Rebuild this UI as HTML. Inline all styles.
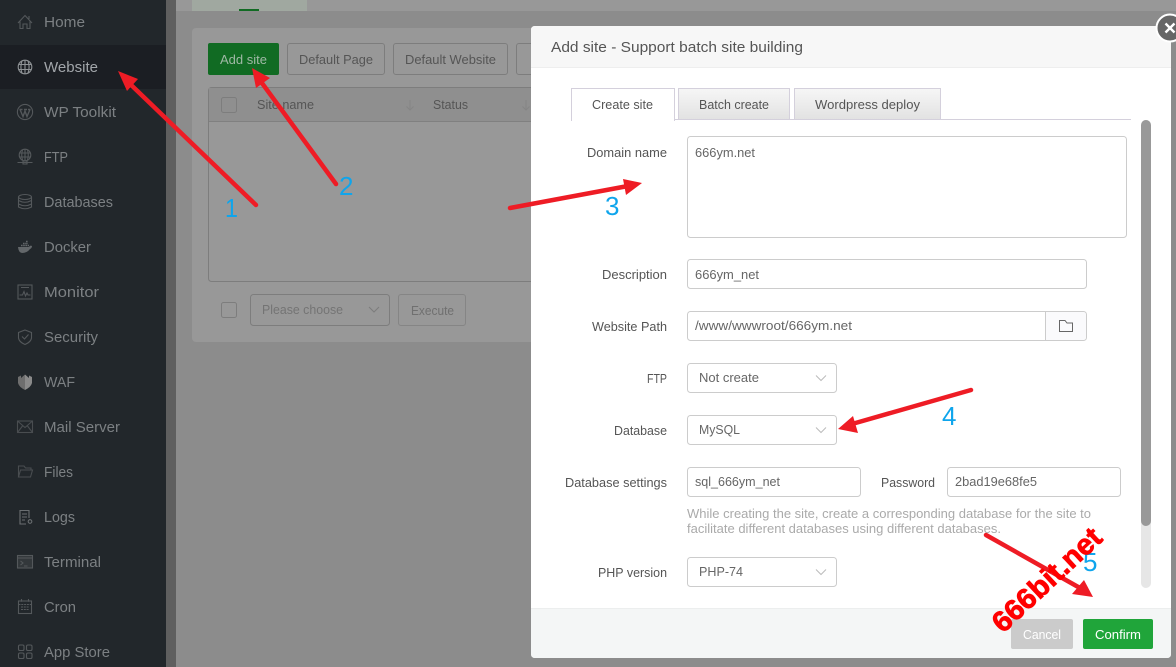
<!DOCTYPE html>
<html lang="en"><head><meta charset="utf-8"><title>Add site</title>
<style>
html,body{margin:0;padding:0;width:1176px;height:667px;overflow:hidden;background:#8c8c8c}
svg{display:block}
text{font-family:"Liberation Sans",sans-serif;font-size:13px;fill:#555}
.nav text{font-size:14.5px;fill:#7c8083}
.ic{fill:none;stroke:#54585b;stroke-width:1.1}
.bg text{fill:#555}
.lab text{fill:#555;text-anchor:end;font-size:13px}
.val text{fill:#666;font-size:13px}
.box{fill:#fff;stroke:#ccc;stroke-width:1}
.chev{fill:none;stroke:#bbb;stroke-width:1}
.ar{stroke:#ee1c25;stroke-width:4.5;stroke-linecap:round;fill:none}
.hd{fill:#ee1c25}
.num text{fill:#0fa5ec;font-size:26px}
</style></head>
<body>
<svg width="1176" height="667" viewBox="0 0 1176 667" xmlns="http://www.w3.org/2000/svg">
<rect width="1176" height="667" fill="#8c8c8c"/>
<rect x="176" y="0" width="1000" height="11" fill="#989898"/>
<rect x="192" y="0" width="115" height="11" fill="#a0a8a0"/>
<rect x="239" y="9" width="20" height="2" fill="#116b23"/>
<rect x="166" y="0" width="10" height="667" fill="#5f5f5f"/>

<!-- sidebar -->
<rect width="166" height="667" fill="#22272b"/>
<rect y="45" width="166" height="44" fill="#1b1e23"/>
<g class="nav">
<text x="44" y="27" textLength="41" lengthAdjust="spacingAndGlyphs">Home</text>
<text x="44" y="72" textLength="54" lengthAdjust="spacingAndGlyphs" style="fill:#a2a6aa">Website</text>
<text x="44" y="117" textLength="72" lengthAdjust="spacingAndGlyphs">WP Toolkit</text>
<text x="44" y="162" textLength="24" lengthAdjust="spacingAndGlyphs">FTP</text>
<text x="44" y="207" textLength="69" lengthAdjust="spacingAndGlyphs">Databases</text>
<text x="44" y="252" textLength="47" lengthAdjust="spacingAndGlyphs">Docker</text>
<text x="44" y="297" textLength="55" lengthAdjust="spacingAndGlyphs">Monitor</text>
<text x="44" y="342" textLength="54" lengthAdjust="spacingAndGlyphs">Security</text>
<text x="44" y="387" textLength="31" lengthAdjust="spacingAndGlyphs">WAF</text>
<text x="44" y="432" textLength="76" lengthAdjust="spacingAndGlyphs">Mail Server</text>
<text x="44" y="477" textLength="29" lengthAdjust="spacingAndGlyphs">Files</text>
<text x="44" y="522" textLength="31" lengthAdjust="spacingAndGlyphs">Logs</text>
<text x="44" y="567" textLength="57" lengthAdjust="spacingAndGlyphs">Terminal</text>
<text x="44" y="612" textLength="32" lengthAdjust="spacingAndGlyphs">Cron</text>
<text x="44" y="657" textLength="66" lengthAdjust="spacingAndGlyphs">App Store</text>
</g>
<g class="ic">
<path d="M18 23 L25 15.500 L32 23 M20 21.500 V28.500 H23 V24 H27 V28.500 H30 V21.500 M29 19 V16"/>
<g stroke="#8f9396"><circle cx="25" cy="67" r="6.800"/><path d="M18.500 64.500 H31.500 M18.500 69.500 H31.500 M25 60 V74 M22 60.800 Q19.800 67 22 73.200 M28 60.800 Q30.200 67 28 73.200"/></g>
<circle cx="25" cy="112" r="7.600"/><path d="M20 109.500 L23 116.500 L25 111 L27 116.500 L30 109.500 M19.500 109.500 H22.500 M24 109.500 H27 M28 109.500 H30.500" stroke-width="1.400"/>
<circle cx="25" cy="155" r="5.800"/><path d="M19.500 153 H30.500 M19.500 157 H30.500 M25 149 V161 M22.500 150 Q21 155 22.500 160 M27.500 150 Q29 155 27.500 160 M17.500 162.500 H32.500 M23 161 H27 V164 H23Z"/>
<ellipse cx="25" cy="197" rx="6.500" ry="2.500"/><path d="M18.500 197 V207 Q25 210.500 31.500 207 V197 M18.500 200.500 Q25 204 31.500 200.500 M18.500 204 Q25 207.500 31.500 204"/>
<path d="M18 247 H29 Q30 245 32 246 Q32 248 30 249 Q27 253 22 253 Q18.500 252.500 18 247Z" fill="#63676a" stroke="none"/><path d="M21 245.500 h8 M23 243.500 h5 M26 241.500 h2" stroke="#63676a" stroke-width="1.600" stroke-dasharray="1.600 .6"/>
<rect x="18" y="285" width="14" height="14"/><path d="M19.500 295 L22.500 295 L24 291.500 L25.500 296 L27 293 L28 295 H30.500 M21 287.500 H29"/>
<path d="M25 330 L31.500 332.500 V338 Q31 342 25 344.500 Q19 342 18.500 338 V332.500Z M22 336.500 L24.500 339 L28.500 334.500"/>
<path d="M18 377 L21 375.500 V378 L25 374.500 V390 Q19 387 18 383Z" fill="#6e6e6e" stroke="none"/>
<path d="M25 374.500 L29 378 V375.500 L32 377 V383 Q31 387 25 390Z" fill="#8a8a8a" stroke="none"/>
<rect x="17.500" y="421" width="15" height="11.500" stroke="#494d50"/><path d="M17.500 421 L25 427.500 L32.500 421 M17.500 432.500 L22.500 426 M32.500 432.500 L27.500 426" stroke="#494d50"/>
<path d="M18.500 477 V466 H24 L25.500 468 H31 V470 M18.500 477 L20.500 470 H32.500 L30.500 477Z" stroke="#494d50"/>
<path d="M29 518 V510.500 H20 V524 H26 M22 514 H27 M22 517 H27 M22 520 H25" stroke="#6a6e71"/><circle cx="30" cy="521.500" r="1.800" stroke="#6a6e71"/>
<rect x="17.500" y="555.500" width="15" height="12.500" fill="#33383b"/><path d="M17.500 558 H32.500 M20.500 561 L23 563 L20.500 565 M24 566 H27.500"/>
<rect x="18.500" y="601" width="13" height="12.500"/><path d="M18.500 604.500 H31.500 M21.500 599 V602 M28.500 599 V602 M21 607 H29 M21 609.500 H29" stroke-dasharray="2 .8"/>
<rect x="18.500" y="645" width="5.500" height="5.500" rx="1.400"/><rect x="26.500" y="645" width="5.500" height="5.500" rx="1.400"/><rect x="18.500" y="653" width="5.500" height="5.500" rx="1.400"/><rect x="26.500" y="653" width="5.500" height="5.500" rx="1.400"/>
</g>

<!-- website page, dimmed -->
<rect x="192" y="28" width="360" height="314" rx="4" fill="#989898"/>
<rect x="208" y="43" width="71" height="32" rx="2" fill="#116b23"/>
<text x="220" y="64" textLength="47" lengthAdjust="spacingAndGlyphs" style="fill:#9fb8a5">Add site</text>
<g fill="none" stroke="#7d7d7d">
<rect x="287.500" y="43.500" width="97" height="31" rx="2.500"/>
<rect x="393.500" y="43.500" width="114" height="31" rx="2.500"/>
<rect x="516.500" y="43.500" width="30" height="31" rx="2.500"/>
<rect x="208.500" y="87.500" width="340" height="194" rx="3"/>
</g>
<rect x="209" y="88" width="340" height="33" fill="#8f8f8f"/>
<path d="M209 121.500 H540" stroke="#808080"/>
<g class="bg">
<text x="299" y="64" textLength="74" lengthAdjust="spacingAndGlyphs">Default Page</text>
<text x="405" y="64" textLength="91" lengthAdjust="spacingAndGlyphs">Default Website</text>
<text x="257" y="109" textLength="57" lengthAdjust="spacingAndGlyphs">Site name</text>
<text x="433" y="109" textLength="35" lengthAdjust="spacingAndGlyphs">Status</text>
</g>
<path d="M410 100 V110 M406.500 106.500 L410 110 L413.500 106.500 M526 100 V110 M522.500 106.500 L526 110 L529.500 106.500" stroke="#858585" fill="none"/>
<g fill="none" stroke="#7d7d7d">
<rect x="221.500" y="97.500" width="15" height="15" rx="2"/>
<rect x="221.500" y="302.500" width="15" height="15" rx="2"/>
<rect x="250.500" y="294.500" width="139" height="31" rx="3"/>
<rect x="398.500" y="294.500" width="67" height="31" rx="2.500" stroke="#858585"/>
<path d="M369 307 L374 312 L379 307"/>
</g>
<text x="262" y="314" textLength="81" lengthAdjust="spacingAndGlyphs" style="fill:#747474">Please choose</text>
<text x="411" y="315" textLength="43" lengthAdjust="spacingAndGlyphs" style="fill:#707070">Execute</text>

<!-- modal -->
<rect x="531" y="26" width="640" height="632" rx="4" fill="#fff"/>
<path d="M531 67 V30 Q531 26 535 26 H1167 Q1171 26 1171 30 V67Z" fill="#f7f7f7"/>
<path d="M531 67.500 H1171" stroke="#eee"/>
<text x="551" y="52" textLength="252" lengthAdjust="spacingAndGlyphs" style="font-size:15px;fill:#555">Add site - Support batch site building</text>
<circle cx="1170" cy="28" r="13.500" fill="#666" stroke="#fff" stroke-width="2"/>
<path d="M1165.500 23.500 L1174.500 32.500 M1174.500 23.500 L1165.500 32.500" stroke="#fff" stroke-width="2.400"/>

<!-- tabs -->
<defs><linearGradient id="t" x1="0" y1="0" x2="0" y2="1"><stop offset="0" stop-color="#f6f6f6"/><stop offset="1" stop-color="#e2e2e2"/></linearGradient></defs>
<path d="M571 119.500 H1131" stroke="#d4d0dc"/>
<rect x="571.500" y="88.500" width="103" height="32" fill="#fff" stroke="#d4d0dc"/>
<rect x="572" y="119" width="102" height="3" fill="#fff"/>
<rect x="678.500" y="88.500" width="111" height="31" fill="url(#t)" stroke="#d4d0dc"/>
<rect x="794.500" y="88.500" width="146" height="31" fill="url(#t)" stroke="#d4d0dc"/>
<text x="592" y="109" textLength="61" lengthAdjust="spacingAndGlyphs">Create site</text>
<text x="699" y="109" textLength="70" lengthAdjust="spacingAndGlyphs">Batch create</text>
<text x="815" y="109" textLength="105" lengthAdjust="spacingAndGlyphs">Wordpress deploy</text>

<!-- scrollbar -->
<rect x="1141" y="120" width="10" height="468" rx="5" fill="#e6e6e6"/>
<rect x="1141" y="120" width="10" height="406" rx="5" fill="#999"/>

<!-- form -->
<g class="lab">
<text x="667" y="157" textLength="80" lengthAdjust="spacingAndGlyphs">Domain name</text>
<text x="667" y="279" textLength="65" lengthAdjust="spacingAndGlyphs">Description</text>
<text x="667" y="331" textLength="75" lengthAdjust="spacingAndGlyphs">Website Path</text>
<text x="667" y="383" textLength="20" lengthAdjust="spacingAndGlyphs">FTP</text>
<text x="667" y="435" textLength="53" lengthAdjust="spacingAndGlyphs">Database</text>
<text x="667" y="487" textLength="102" lengthAdjust="spacingAndGlyphs">Database settings</text>
<text x="935" y="487" textLength="54" lengthAdjust="spacingAndGlyphs">Password</text>
<text x="667" y="577" textLength="69" lengthAdjust="spacingAndGlyphs">PHP version</text>
</g>
<g class="box">
<rect x="687.500" y="136.500" width="439" height="101" rx="3"/>
<rect x="687.500" y="259.500" width="399" height="29" rx="3"/>
<rect x="687.500" y="311.500" width="399" height="29" rx="3"/>
<rect x="687.500" y="363.500" width="149" height="29" rx="3"/>
<rect x="687.500" y="415.500" width="149" height="29" rx="3"/>
<rect x="687.500" y="467.500" width="173" height="29" rx="3"/>
<rect x="947.500" y="467.500" width="173" height="29" rx="3"/>
<rect x="687.500" y="557.500" width="149" height="29" rx="3"/>
</g>
<path d="M1046 312 H1083 Q1086 312 1086 315 V337 Q1086 340 1083 340 H1046Z" fill="#fafafc"/>
<path d="M1045.500 311 V341" stroke="#ccc"/>
<path d="M1059.500 320.500 H1065 L1067 323 H1072.500 V331.500 H1059.500Z" fill="none" stroke="#666" stroke-width="1"/>
<g class="chev">
<path d="M816 375.500 L821 380.500 L826 375.500"/>
<path d="M816 427.500 L821 432.500 L826 427.500"/>
<path d="M816 569.500 L821 574.500 L826 569.500"/>
</g>
<g class="val">
<text x="695" y="157" textLength="60" lengthAdjust="spacingAndGlyphs">666ym.net</text>
<text x="695" y="279" textLength="64" lengthAdjust="spacingAndGlyphs">666ym_net</text>
<text x="695" y="330" textLength="157" lengthAdjust="spacingAndGlyphs">/www/wwwroot/666ym.net</text>
<text x="699" y="382" textLength="60" lengthAdjust="spacingAndGlyphs">Not create</text>
<text x="699" y="434" textLength="41" lengthAdjust="spacingAndGlyphs">MySQL</text>
<text x="695" y="486" textLength="85" lengthAdjust="spacingAndGlyphs">sql_666ym_net</text>
<text x="955" y="486" textLength="82" lengthAdjust="spacingAndGlyphs">2bad19e68fe5</text>
<text x="699" y="576" textLength="44" lengthAdjust="spacingAndGlyphs">PHP-74</text>
</g>
<text x="687" y="518" textLength="404" lengthAdjust="spacingAndGlyphs" style="font-size:13px;fill:#aaa">While creating the site, create a corresponding database for the site to</text>
<text x="687" y="533" textLength="314" lengthAdjust="spacingAndGlyphs" style="font-size:13px;fill:#aaa">facilitate different databases using different databases.</text>

<!-- footer -->
<path d="M531 608 H1171 V654 Q1171 658 1167 658 H535 Q531 658 531 654Z" fill="#f4f6f6"/>
<path d="M531 608.500 H1171" stroke="#eceeee"/>
<rect x="1011" y="619" width="62" height="30" rx="2" fill="#cbcbcb"/>
<rect x="1083" y="619" width="70" height="30" rx="2" fill="#20a53a"/>
<text x="1023" y="639" textLength="38" lengthAdjust="spacingAndGlyphs" style="fill:#fff">Cancel</text>
<text x="1095" y="639" textLength="46" lengthAdjust="spacingAndGlyphs" style="fill:#fff">Confirm</text>

<!-- annotations -->
<g>
<path class="ar" d="M256 205 L128 82"/><polygon class="hd" points="118,71 138,79 127,91"/>
<path class="ar" d="M336 184 L259 79"/><polygon class="hd" points="252,68 270,78 256,88"/>
<path class="ar" d="M510 208 L628 186"/><polygon class="hd" points="642,183 623,179 626,195"/>
<path class="ar" d="M971 390 L852 424"/><polygon class="hd" points="838,429 853,416 858,433"/>
<path class="ar" d="M986 535 L1080 588"/><polygon class="hd" points="1093,597 1072,594 1084,580"/>
</g>
<g class="num">
<text x="225" y="217" textLength="13" lengthAdjust="spacingAndGlyphs">1</text>
<text x="339" y="195">2</text>
<text x="605" y="215">3</text>
<text x="942" y="425">4</text>
<text x="1083" y="571">5</text>
</g>
<text transform="translate(1003 634) rotate(-43)" textLength="138" lengthAdjust="spacingAndGlyphs" style="font-size:29px;font-weight:bold;fill:#f00;stroke:#f00;stroke-width:.8">666bit.net</text>
</svg>
</body></html>
